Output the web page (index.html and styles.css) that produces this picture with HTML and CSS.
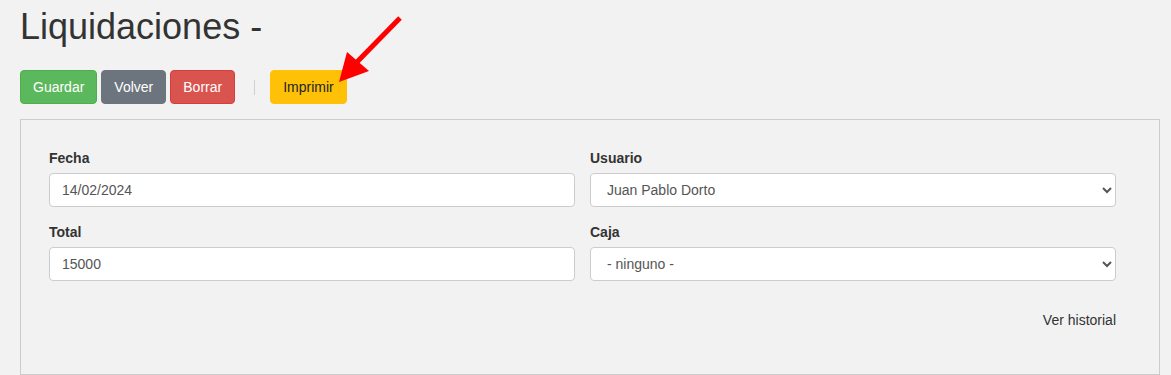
FILE: index.html
```html
<!DOCTYPE html>
<html lang="es">
<head>
<meta charset="utf-8">
<title>Liquidaciones</title>
<link rel="stylesheet" href="styles.css">
</head>
<body>
<div class="page">
  <h1 class="title">Liquidaciones -</h1>
  <div class="toolbar">
    <button class="btn btn-success">Guardar</button>
    <button class="btn btn-secondary">Volver</button>
    <button class="btn btn-danger">Borrar</button>
    <span class="sep"></span>
    <button class="btn btn-warning">Imprimir</button>
  </div>
  <div class="panel">
    <div class="grid">
      <div class="group">
        <label class="label">Fecha</label>
        <input class="control" type="text" value="14/02/2024">
      </div>
      <div class="group">
        <label class="label">Usuario</label>
        <select class="control select"><option>Juan Pablo Dorto</option></select>
      </div>
      <div class="group">
        <label class="label">Total</label>
        <input class="control" type="text" value="15000">
      </div>
      <div class="group">
        <label class="label">Caja</label>
        <select class="control select"><option>- ninguno -</option></select>
      </div>
    </div>
    <div class="history"><a class="history-link">Ver historial</a></div>
  </div>
</div>
<svg class="arrow" width="420" height="100" viewBox="0 0 420 100">
  <line x1="400" y1="18" x2="356" y2="63" stroke="#ff0000" stroke-width="5"/>
  <polygon points="339,82 347,52 369,71" fill="#ff0000"/>
</svg>
</body>
</html>
```

FILE: styles.css
```css
html, body {
  margin: 0;
  padding: 0;
  background: #f2f2f2;
  font-family: "Liberation Sans", Arial, sans-serif;
  font-size: 14px;
  line-height: 20px;
  color: #333;
  overflow: hidden;
}
body { position: relative; }
.page {
  width: 1140px;
  margin-left: 20px;
}
.title {
  font-size: 36px;
  line-height: 40px;
  font-weight: 400;
  margin: 7px 0 23px;
  color: #333;
}
.toolbar {
  display: flex;
  align-items: center;
  gap: 4px;
  margin-bottom: 15px;
}
.btn {
  font-family: inherit;
  font-size: 14px;
  line-height: 20px;
  padding: 6px 12px;
  border: 1px solid transparent;
  border-radius: 4px;
  height: 34px;
  cursor: pointer;
}
.btn-success { background: #5cb85c; border-color: #4cae4c; color: #fff; }
.btn-secondary { background: #6c757d; border-color: #6c757d; color: #fff; }
.btn-danger { background: #d9534f; border-color: #d43f3a; color: #fff; }
.btn-warning { background: #ffc107; border-color: #ffc107; color: #212529; }
.sep {
  width: 1px;
  height: 15px;
  background: #d0d0d0;
  margin: 0 11px 0 15px;
}
.panel {
  border: 1px solid #ccc;
  padding: 28px 43px 44px 28px;
  height: 256px;
  box-sizing: border-box;
}
.grid {
  display: grid;
  grid-template-columns: 1fr 1fr;
  column-gap: 15px;
  row-gap: 15px;
}
.group { display: flex; flex-direction: column; }
.label {
  font-weight: 700;
  margin-bottom: 5px;
}
.control {
  box-sizing: border-box;
  height: 34px;
  padding: 6px 12px;
  font-family: inherit;
  font-size: 14px;
  line-height: 20px;
  color: #555;
  background: #fff;
  border: 1px solid #ccc;
  border-radius: 4px;
  width: 100%;
}
.select { padding: 6px 12px; }
.history {
  display: flex;
  justify-content: flex-end;
  margin-top: 29px;
}
.history-link { color: #333; }
.arrow {
  position: absolute;
  left: 0;
  top: 0;
  pointer-events: none;
}
```
